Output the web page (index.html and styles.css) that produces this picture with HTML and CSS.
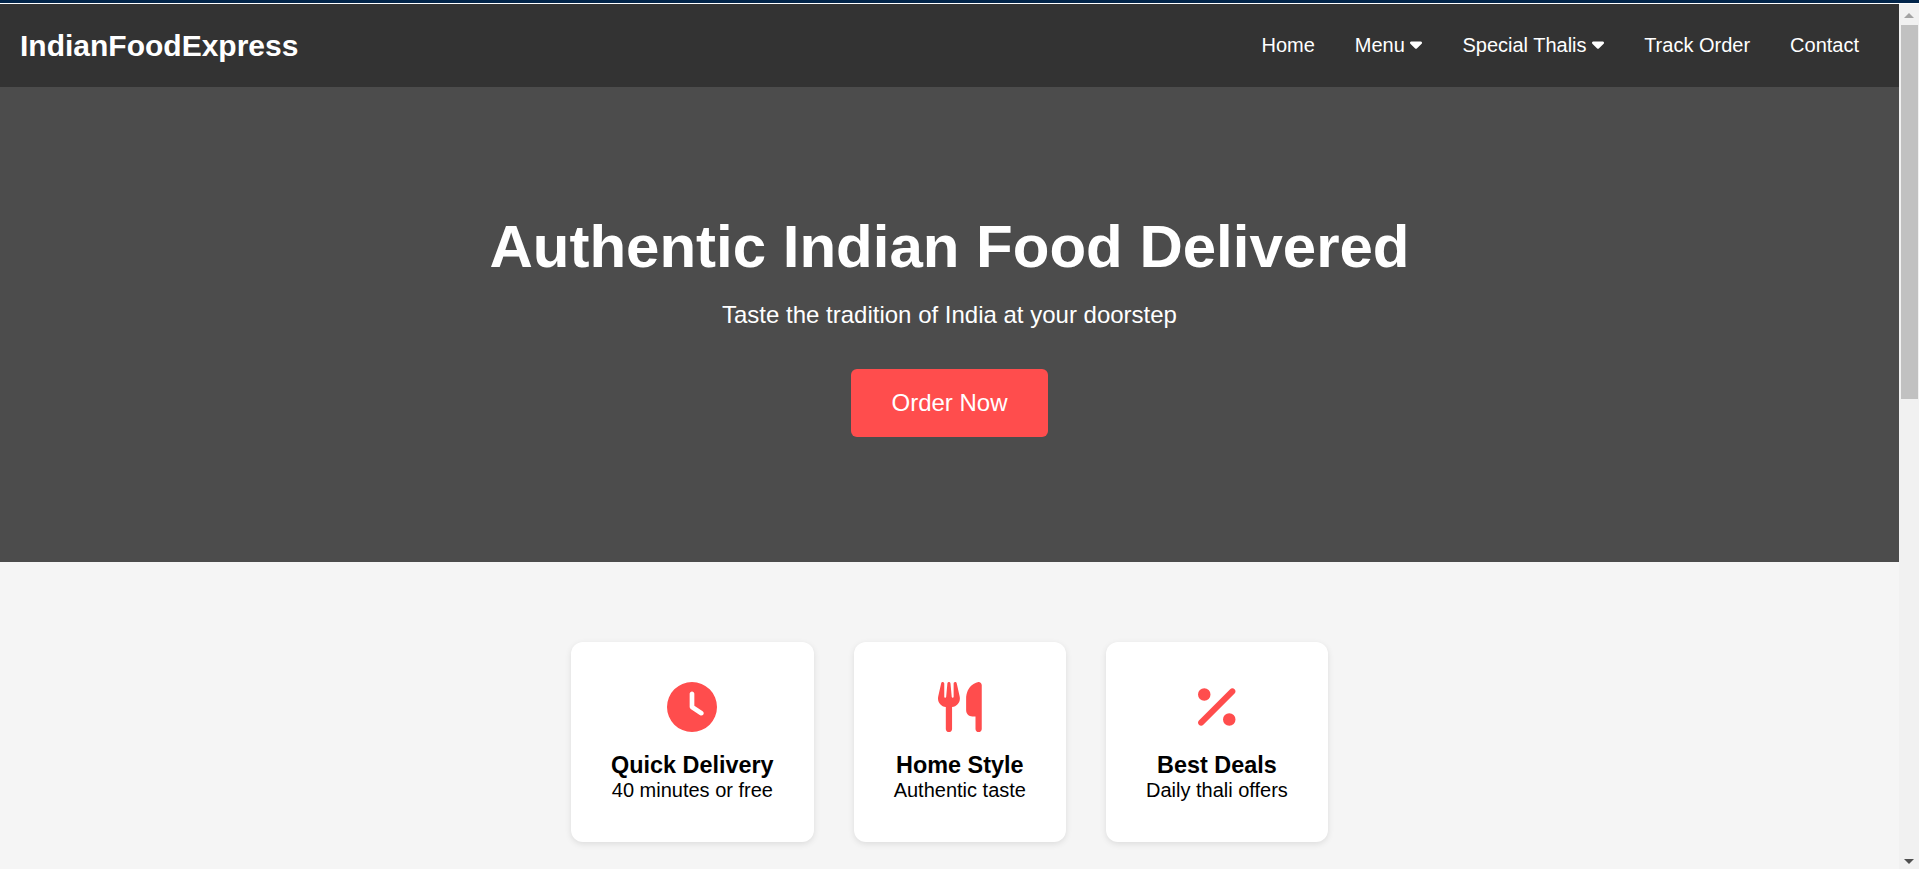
FILE: index.html
```html
<!DOCTYPE html>
<html lang="en">
<head>
<meta charset="utf-8">
<title>IndianFoodExpress</title>
<link rel="stylesheet" href="styles.css">
</head>
<body>
<div class="window-edge"></div>
<div class="window">
  <div class="page">
    <header class="navbar">
      <div class="logo">IndianFoodExpress</div>
      <nav class="nav-links">
        <a href="#home">Home</a>
        <a href="#menu">Menu <svg class="caret" viewBox="0 0 320 512" aria-hidden="true"><path d="M137.4 374.6c12.5 12.5 32.8 12.5 45.3 0l128-128c9.2-9.2 11.9-22.9 6.9-34.9s-16.6-19.8-29.6-19.8L32 192c-12.9 0-24.6 7.8-29.6 19.8s-2.2 25.7 6.9 34.9l128 128z"/></svg></a>
        <a href="#thalis">Special Thalis <svg class="caret" viewBox="0 0 320 512" aria-hidden="true"><path d="M137.4 374.6c12.5 12.5 32.8 12.5 45.3 0l128-128c9.2-9.2 11.9-22.9 6.9-34.9s-16.6-19.8-29.6-19.8L32 192c-12.9 0-24.6 7.8-29.6 19.8s-2.2 25.7 6.9 34.9l128 128z"/></svg></a>
        <a href="#track">Track Order</a>
        <a href="#contact">Contact</a>
      </nav>
    </header>
    <main>
      <section class="hero" id="home">
        <h1>Authentic Indian Food Delivered</h1>
        <p>Taste the tradition of India at your doorstep</p>
        <button class="order-button" type="button">Order Now</button>
      </section>
      <section class="features">
        <article class="card">
          <svg class="card-icon" viewBox="0 0 512 512" aria-hidden="true"><path d="M256 0a256 256 0 1 1 0 512A256 256 0 1 1 256 0zM232 120V256c0 8 4 15.5 10.7 20l96 64c11 7.4 25.9 4.4 33.3-6.7s4.4-25.9-6.7-33.3L280 243.2V120c0-13.3-10.7-24-24-24s-24 10.7-24 24z"/></svg>
          <h3>Quick Delivery</h3>
          <p>40 minutes or free</p>
        </article>
        <article class="card">
          <svg class="card-icon" viewBox="0 0 448 512" aria-hidden="true"><path d="M416 0C400 0 288 32 288 176V288c0 35.3 28.7 64 64 64h32V480c0 17.7 14.3 32 32 32s32-14.3 32-32V352 240 32c0-17.7-14.3-32-32-32zM64 16C64 7.8 57.9 1 49.7 .1S34.2 4.6 32.4 12.5L2.1 148.8C.7 155.1 0 161.5 0 167.9c0 45.9 35.1 83.6 80 87.7V480c0 17.7 14.3 32 32 32s32-14.3 32-32V255.6c44.9-4.1 80-41.8 80-87.7c0-6.4-.7-12.8-2.1-19.1L191.6 12.5c-1.8-8-9.3-13.3-17.4-12.4S160 7.8 160 16V150.2c0 5.4-4.4 9.8-9.8 9.8c-5.1 0-9.3-3.9-9.8-9L127.9 14.6C127.2 6.3 120.3 0 112 0s-15.2 6.3-15.9 14.6L83.7 151c-.5 5.1-4.7 9-9.8 9c-5.4 0-9.8-4.4-9.8-9.8V16z"/></svg>
          <h3>Home Style</h3>
          <p>Authentic taste</p>
        </article>
        <article class="card">
          <svg class="card-icon" viewBox="0 0 384 512" aria-hidden="true"><path d="M374.6 118.6c12.5-12.5 12.5-32.8 0-45.3s-32.8-12.5-45.3 0l-320 320c-12.5 12.5-12.5 32.8 0 45.3s32.8 12.5 45.3 0l320-320zM128 128A64 64 0 1 0 0 128a64 64 0 1 0 128 0zM384 384a64 64 0 1 0 -128 0 64 64 0 1 0 128 0z"/></svg>
          <h3>Best Deals</h3>
          <p>Daily thali offers</p>
        </article>
      </section>
    </main>
  </div>
  <div class="scrollbar" aria-hidden="true">
    <svg class="scroll-arrow scroll-arrow-up" viewBox="0 0 20 21"><path d="M10 9l5 5H5z"/></svg>
    <div class="scroll-track"><div class="scroll-thumb"></div></div>
    <svg class="scroll-arrow" viewBox="0 0 20 21"><path d="M5 11h10l-5 5z"/></svg>
  </div>
</div>
</body>
</html>
```
FILE: styles.css
```css
* {
  box-sizing: border-box;
  margin: 0;
  padding: 0;
}

body {
  display: flex;
  flex-direction: column;
  height: 100vh;
  overflow: hidden;
  background: #f5f5f5;
  color: #000;
  font-family: Arial, "Liberation Sans", sans-serif;
  font-size: 20px;
}

.window-edge {
  flex: none;
  height: 4px;
  background: #02254a;
  border-bottom: 1px solid #fff;
}

.window {
  flex: 1;
  min-height: 0;
  display: grid;
  grid-template-columns: 1fr 20px;
}

.page {
  min-width: 0;
  min-height: 0;
  overflow: hidden;
}

.navbar {
  display: flex;
  align-items: center;
  justify-content: space-between;
  min-height: 83px;
  padding: 20px;
  background: #333;
  color: #fff;
}

.logo {
  font-size: 30px;
  font-weight: bold;
}

.nav-links {
  display: flex;
  gap: 40px;
  padding-right: 20px;
}

.nav-links a {
  color: #fff;
  text-decoration: none;
  white-space: nowrap;
}

.caret {
  width: 12px;
  height: 20px;
  fill: currentColor;
  vertical-align: -2px;
}

.hero {
  display: flex;
  flex-direction: column;
  align-items: center;
  padding: 125px 20px;
  background: #4c4c4c;
  color: #fff;
  text-align: center;
}

.hero h1 {
  margin-bottom: 20px;
  font-size: 60px;
}

.hero p {
  margin-bottom: 40px;
  font-size: 24px;
}

.order-button {
  padding: 20px 40px;
  border: 0;
  border-radius: 6px;
  background: #ff4d4d;
  color: #fff;
  font-family: inherit;
  font-size: 24px;
  cursor: pointer;
}

.features {
  display: flex;
  justify-content: center;
  gap: 40px;
  padding: 80px 40px;
}

.card {
  padding: 40px;
  border-radius: 12px;
  background: #fff;
  box-shadow: 0 2px 6px rgba(0, 0, 0, 0.1);
  text-align: center;
}

.card-icon {
  display: block;
  height: 50px;
  margin: 0 auto 20px;
  fill: #ff4d4d;
}

.scrollbar {
  display: flex;
  flex-direction: column;
  background: #f1f1f1;
}

.scroll-arrow {
  flex: none;
  width: 20px;
  height: 21px;
  fill: #505050;
}

.scroll-arrow-up {
  fill: #a3a3a3;
}

.scroll-track {
  flex: 1;
  padding: 0 1px 0 2px;
}

.scroll-thumb {
  height: 45.5%;
  background: #c1c1c1;
}
```
